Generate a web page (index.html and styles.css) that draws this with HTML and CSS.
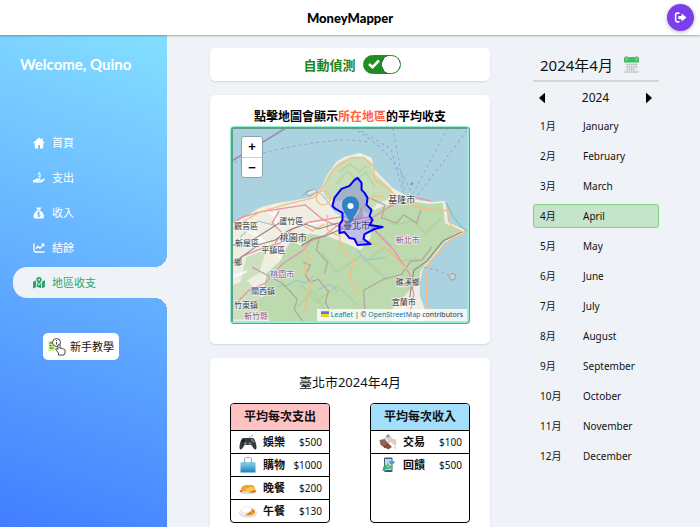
FILE: index.html
```html
<!DOCTYPE html>
<html lang="zh-Hant">
<head>
<meta charset="utf-8">
<meta name="viewport" content="width=device-width, initial-scale=1">
<title>MoneyMapper</title>
<link rel="stylesheet" href="styles.css">
</head>
<body>
<header class="topbar">
  <h1 class="brand">MoneyMapper</h1>
  <button class="logout" type="button" aria-label="Log out">
    <svg viewBox="0 0 24 24" width="13" height="13"><path d="M9 4H6a3 3 0 0 0-3 3v10a3 3 0 0 0 3 3h3" fill="none" stroke="#fff" stroke-width="3" stroke-linecap="round"/><path d="M14 4.500 23 12l-9 7.500V15H9.500A1.500 1.500 0 0 1 8 13.500v-3A1.500 1.500 0 0 1 9.500 9H14z" fill="#fff"/></svg>
  </button>
</header>
<div class="layout">
  <aside class="sidebar">
    <p class="welcome">Welcome, Quino</p>
    <nav class="nav">
      <a class="nav-link" href="#home"><svg viewBox="0 0 24 24"><path d="M12 1 .5 11.500 2 13.200l1.500-1V21a2 2 0 0 0 2 2H10v-7h4v7h4.500a2 2 0 0 0 2-2v-8.800l1.500 1 1.500-1.700-4-3.600V3h-3v2.200z"/></svg>首頁</a>
      <a class="nav-link" href="#expense"><svg viewBox="0 0 24 24"><path d="M0 16h3l2.500-2c1-.8 2-1 3-1h5.500c2 0 2 3 0 3H10.500v1H16l5-3.700c1.800-1 3.500 1 2 2.500l-5.500 4.700c-.7.500-1.300.5-2 .5H0z"/><path d="M15.500 3.500c-1-1.500-5-1.500-5 .7 0 2.300 5 1.200 5 3.600 0 2.200-4 2-5.200.5M13 0v2M13 9v2" fill="none" stroke="currentColor" stroke-width="1.800"/></svg>支出</a>
      <a class="nav-link" href="#income"><svg viewBox="0 0 24 24"><path d="M6 1h11l-3 5H9zM8.500 7h6C19 10 22 14 22 19c0 3-2 4-4 4H5c-2 0-4-1-4-4 0-5 3-9 7.500-12z"/><path class="cut" d="M14 12c-.8-1.700-5-1.700-5 .7 0 2.600 5.200 1.700 5.200 4.300 0 2.300-4.600 2.200-5.500.3M11.500 9.500v11"/></svg>收入</a>
      <a class="nav-link" href="#balance"><svg viewBox="0 0 24 24"><path d="M2 3v14a3 3 0 0 0 3 3h18M6 13.500l4-5 4 4L21 5m-4-.5h4.500V9" fill="none" stroke="currentColor" stroke-width="2.600"/></svg>結餘</a>
      <a class="nav-link active" href="#region" aria-current="page"><svg viewBox="0 0 24 24"><path d="M0 9.500 6 7v13.500L0 23zM18 9l6-2.500V20l-6 2.500zM7.500 11l4.500 6 4.500-6v11.500l-9-3z"/><path d="M12 0c3.300 0 5.500 2.300 5.500 5.200 0 3-3.500 7-5.500 9.300-2-2.300-5.500-6.300-5.500-9.300C6.500 2.300 8.700 0 12 0zm0 3.300a2 2 0 1 0 0 4 2 2 0 0 0 0-4z"/></svg>地區收支</a>
    </nav>
    <button class="tutorial" type="button">
      <svg viewBox="0 0 36 36" width="18" height="18"><path d="M1 6h12v20H1z" fill="#ccf58b"/><g fill="none" stroke="#333" stroke-width="1.800"><path d="M3 10h5M3 15h4M3 20h8"/><circle cx="17" cy="9" r="8" fill="#fff" fill-opacity=".7"/><path d="M17 8v5M17 4v2"/><path d="M21 34v-4c-3-3-4-6-6-8 1-3 3-1 5 1V14c1-3 4-2 4 0v7c3-2 4-1 5 1 3-1 5 0 5 3v5l-2 4z" fill="#fff"/></g></svg>
      新手教學
    </button>
  </aside>

  <main class="content">
    <section class="card detect">
      <label class="detect-label" for="auto">自動偵測</label>
      <span class="switch">
        <input type="checkbox" id="auto" checked>
        <svg class="switch-check" viewBox="0 0 12 10" width="12" height="10"><path d="m1 5 3.500 3.200L11 1.500" fill="none" stroke="#fff" stroke-width="2.600"/></svg>
      </span>
    </section>

    <section class="card map-card">
      <h2 class="map-title">點擊地圖會顯示<em>所在地區</em>的平均收支</h2>
      <div class="map">
        <svg class="map-art" viewBox="234 129 233 192" preserveAspectRatio="xMidYMid slice" role="img" aria-label="地圖">
          <path d="M230 120h245v210H230z" fill="#aad3df"/>
          <path d="M230 224 245 217l17-10 16-4 19-3 15-3 10-9 6-13 9-13 8-5 8-2 7-2 12 5 3 12 10 10 8 8 12 7 13 5 15 2 12-1 2 11 1 10 17 8-3 5-17 7-10 13-12 14-3 13v13l5 14 3 12H230z" fill="#f0eee3"/>
          <g fill="#bddaae">
            <path d="M323 189l6-14 10-12 14-6 11 0 8 6 2 10 10 9 9 9-4 8-12 5-8 9-10-3-9-12-10 3-13-2z" opacity=".8"/>
            <path d="M372 211l18-7 20-3 18 3 15-1 2 20 16 9-16 9-12 15-12 14-3 14-8 6-10 11-8 10-5 17h-93l-12-20-18-18 4-18 12-10 9-17 8-9 15-2 18 3 18 7 13 6 10-12z"/>
            <path d="M285 264l12-10 15 3 30 7 19 25-3 35h-84l-20-22 14-8z"/>
            <path d="M234 285l13-6 14 15 5 25h-32zM247 257l20-7-7 23-19 11z" opacity=".7"/>
          </g>
          <path d="m390 325 4-20 15-12 8 2 4 15 5 15z" fill="#efeee5"/>
          <g fill="none" stroke="#a7ca98" stroke-width="2" opacity=".45"><path d="m340 172 10-8 10 8 7-6M337 184l11-13 9 10 9-9 9 15M385 216l9 9 19-4 12 12 16-14M368 260l17-13 15 14 18-3M322 251l15 21 24-16 26 23M302 284l15 18 21-17 20 20M298 307l15-17 15 24"/></g>
          <g fill="none" stroke="#8ec5d8" stroke-width="1"><path d="m302 197 8-7 12 4 15 19 18 8 15 5 22 20M278 286l10-1 9-5 9 3 8-7M318 290l12-6 9 7M357 250l10 10 19-3M241 237l18-16 15 4"/></g>
          <g fill="none" stroke="#ada59e" stroke-width="1.200"><path d="m253 267 17 9 13 7 7 7 8 9-3 10 9 13M304 262l7 3-5 10 5 7 8-3 10 12-3 11 9 18M366 320l-2-30 20-11 18-5 9-13 11-1 10-13M370 198l15 7-3 13 15 5 7-8 13 8 4-13M320 237l-3 13 11 12-3 12"/></g>
          <g fill="none" stroke="#ffffff" stroke-width="2" opacity=".8"><path d="m240 226 23 13 19 20M248 218l18 32M275 205l3 24 24 16M264 209l28 17 42-5M233 277l15-6M400 299l8 23"/></g>
          <g fill="none" stroke="#e892a2" stroke-width="1.300"><path d="m230 225 14-8 17-5 20-3 25-4 18 15 17 7 28-7 24-15 20-8 18 4M234 261l12-6 20-8 15-4 12-14 18-7 31-5M234 306l16-16 16-7 18-20 19-12 8-10 15-6 19-15M350 221l20-4 5 13 19 20 16 24 4 20-6 30M280 211l-7 12 10 10-7 10"/></g>
          <g fill="none" stroke="#f7bd80" stroke-width="1.300"><path d="m234 229 13-9 14-8 24-7 29-7 10-11 10-18 18-11 12 0 10 8 1 14 13 8 12 12 20 8 28 3 3 15 14 7-14 6-10 11-12 13-3 17 1 19 4 17M306 247l4 12-5 11 7 11-3 13-5 18M340 233l1 14 13 13-4 19 11 17M354 242l16-1 19 10 18 18M347 211l16-3 11-12 10 1M328 215v15l12 6M299 222l14 9 12-7"/><circle cx="324" cy="198" r="7"/></g>
          <g fill="none" stroke="#8b8782" stroke-width="1.100"><path d="m234 245 18-4 14-9 22-14M234 263l25-18 17-5 14-10 16-6 13 5 16-5 19-5M302 246l11-7 13-3 18-8M462 232l-19 9-16 20-13 9-4 27"/></g>
          <g fill="none" stroke="#8995db" stroke-width="1" stroke-dasharray="3 3" opacity=".7"><path d="M230 165q50-20 116-25l22 2M356 128l35 21 13 45M393 128l12 63M448 128l-35 66M467 131l-49 64M411 191q-20-43-58-62M424 267q20 4 28 10"/></g>
          <path d="m230 163 59-36" stroke="#9c8db0" stroke-width="1.700"/>
          <path d="m306 193 9-4 3 3-8 4z" fill="#dce4dd" stroke="#92848b" stroke-width=".7"/>
          <path d="M446 202q10 23 21 29" fill="none" stroke="#85bba8"/>
          <path d="m449 276 3-3 4 2-1 4-4 1z" fill="#d0d4c4" stroke="#8894a5" stroke-width=".8"/><circle cx="412" cy="184" r="1.500" fill="#8e91be"/>
          <g class="place" text-anchor="middle">
            <text x="292" y="224">蘆竹區</text><text x="247" y="229">觀音區</text><text x="248" y="246">新屋區</text><text x="274" y="253">平鎮區</text><text x="402" y="203" class="city">基隆市</text><text x="294" y="241" class="city">桃園市</text><text x="264" y="294">關西鎮</text><text x="247" y="308">竹東鎮</text><text x="408" y="285">礁溪鄉</text><text x="404" y="305">宜蘭市</text><text x="239" y="265">鄉</text>
            <g class="county"><text x="283" y="277">桃園市</text><text x="408" y="243">新北市</text><text x="257" y="319">新竹縣</text></g>
            <text x="357" y="229" class="city">臺北市</text>
          </g>
          <path d="m358 178 4 5 0 7 3 3 3 5-1 7 5 5-2 6 3 4-3 5 13 2-8 2-10 5-1 5 7 5-13 1-3-6-5-1-5-6-5 1v-8l3-5v-7l-7-4-3-3 2-8 7-9 8-3 5-6z" fill="#3333ff" fill-opacity=".25" stroke="#0000f5" stroke-width="2" stroke-linejoin="round"/>
          <path d="m352 222 12-5-2-9z" fill="#444" opacity=".25"/>
          <path d="M351 197c5 0 8 3 8 8 0 6-6 12-8 18-2-6-8-12-8-18 0-5 3-8 8-8z" fill="#2d84c8" stroke="#246da6" stroke-width=".7"/><circle cx="351" cy="206" r="3" fill="#fff"/>
        </svg>
        <div class="zoom"><button type="button" aria-label="Zoom in">+</button><button type="button" aria-label="Zoom out">−</button></div>
        <div class="attribution"><a href="#leaflet"><svg viewBox="0 0 12 8" width="8" height="6"><path fill="#4c7be1" d="M0 0h12v4H0z"/><path fill="#ffd500" d="M0 4h12v3H0z"/><path fill="#e0bc00" d="M0 7h12v1H0z"/></svg> Leaflet</a> | © <a href="#osm">OpenStreetMap</a> contributors</div>
      </div>
    </section>

    <section class="card stats">
      <h2 class="stats-title">臺北市2024年4月</h2>
      <div class="tables">
        <div class="panel">
          <table class="ledger">
            <thead><tr><th class="head expense" colspan="3">平均每次支出</th></tr></thead>
            <tbody>
              <tr><td class="pic"><svg viewBox="0 0 36 32"><path d="M20 9q0-4 4-4 4 0 3-4" fill="none" stroke="#999" stroke-width="1.500"/><path d="M8 8h20c4 1 7 13 7 19 0 5-4 5-7 0l-3-5H11l-3 5c-3 5-7 5-7 0C1 21 4 9 8 8z" fill="#34383d"/><path d="M8 11v7m-3-4h7" stroke="#111" stroke-width="2"/><circle cx="13" cy="19" r="3" fill="#777"/><circle cx="22" cy="19" r="3" fill="#777"/><circle cx="26" cy="12" r="2" fill="#4b9ce4"/><circle cx="29" cy="15" r="2" fill="#63a7d8"/></svg></td><th class="name" scope="row">娛樂</th><td class="amount">$500</td></tr>
              <tr><td class="pic"><svg viewBox="0 0 36 32"><defs><linearGradient id="bag" x2="0" y2="1"><stop stop-color="#93d4ed"/><stop offset="1" stop-color="#1680bd"/></linearGradient></defs><path d="M3 10h30v21H3z" fill="url(#bag)"/><path d="M11 14V5q0-4 4-4h6q4 0 4 4v9" fill="none" stroke="#78a6be" stroke-width="1.800"/></svg></td><th class="name" scope="row">購物</th><td class="amount">$1000</td></tr>
              <tr><td class="pic"><svg viewBox="0 0 36 32"><path d="M1 22h34q-4 6-10 6H9q-6 0-8-6z" fill="#ddd9cf"/><path d="M3 22q1-12 12-12h10q6 0 7 8l3 3q-2 4-7 2z" fill="#f6a12c"/><path d="m11 18 16-5 5 7-15 3z" fill="#ffc45a"/><path d="M1 21q3-2 6 3H3zM27 22l7 0-3 3h-6z" fill="#d84436"/><path d="M22 23h6l-3 2h-5z" fill="#70a83e"/></svg></td><th class="name" scope="row">晚餐</th><td class="amount">$200</td></tr>
              <tr><td class="pic"><svg viewBox="0 0 36 32"><ellipse cx="18" cy="20" rx="18" ry="9" fill="#d3d5d7"/><ellipse cx="18" cy="18" rx="17" ry="9" fill="#eee"/><path d="M20 10c8 0 12 4 12 8s-6 7-13 7H9c8-1 4-4 11-6z" fill="#f59b23"/><path d="M6 17Q6 7 16 7q9 0 9 7-3 6-14 6z" fill="#fff" stroke="#ddd"/><path d="m21 19 3 2m3-5 2 1m-10 5 2 1" stroke="#b64f13" stroke-width="2"/></svg></td><th class="name" scope="row">午餐</th><td class="amount">$130</td></tr>
            </tbody>
          </table>
        </div>
        <div class="panel">
          <table class="ledger">
            <thead><tr><th class="head income" colspan="3">平均每次收入</th></tr></thead>
            <tbody>
              <tr><td class="pic"><svg viewBox="0 0 36 32"><path d="M9 12Q11 3 18 3q9 0 10 10z" fill="#c8dbf8"/><circle cx="18" cy="4" r="3.500" fill="#a89468"/><path d="M1 12 11 10l15 16-7 5L3 22z" fill="#936052"/><path d="m34 11-11-2-8 6 4 4 5-3 8 8 3-5z" fill="#e7c7b9"/><path d="m9 23 3 5m1-7 4 8m0-9 5 7" stroke="#6f4037" stroke-width="2.500"/><path d="m29 26 3 3 2-4" stroke="#c77" fill="none"/></svg></td><th class="name" scope="row">交易</th><td class="amount">$100</td></tr>
              <tr><td class="pic"><svg viewBox="0 0 36 32"><rect x="10" y="1" width="17" height="29" rx="2" fill="#455d71"/><path d="M12 4h13v22H12z" fill="#b6dcf6"/><path d="m20 8 12 0-3 6h-7zM6 25l8-1v4H8z" fill="#529beb"/><path d="M8 22q1-7 8-6l2-5 2 6q6 0 4 5l-7 3-3-2-6 3z" fill="#35b463"/><circle cx="18" cy="19" r="3" fill="#80d56c"/></svg></td><th class="name" scope="row">回饋</th><td class="amount">$500</td></tr>
            </tbody>
          </table>
        </div>
      </div>
    </section>
  </main>

  <aside class="calendar">
    <h2 class="cal-title">2024年4月
      <svg viewBox="0 0 34 36" width="17" height="18"><rect x="2" y="3" width="30" height="31" rx="2" fill="#ebedee"/><path d="M2 4q0-2 2-2h26q2 0 2 2v9H2z" fill="#3ac45a"/><path d="M5 34h24l2-1v-3H3v3z" fill="#cfd1d3"/><path d="M7 17h21M7 22h21M7 27h17" stroke="#b0b4b8" stroke-width="3" stroke-dasharray="3 1.500"/><path d="M7 1v7M27 1v7" stroke="#a3b2aa" stroke-width="4" stroke-linecap="round"/></svg>
    </h2>
    <div class="year">
      <button type="button" aria-label="Previous year"><svg viewBox="0 0 6 10" width="6" height="10"><path d="M5.500.5v9L.5 5z" stroke="#000" stroke-linejoin="round"/></svg></button>
      <span>2024</span>
      <button type="button" aria-label="Next year"><svg viewBox="0 0 6 10" width="6" height="10"><path d="M.5.5v9l5-4.500z" stroke="#000" stroke-linejoin="round"/></svg></button>
    </div>
    <div class="months">
      <button type="button" class="month"><span>1月</span><span>January</span></button>
      <button type="button" class="month"><span>2月</span><span>February</span></button>
      <button type="button" class="month"><span>3月</span><span>March</span></button>
      <button type="button" class="month selected"><span>4月</span><span>April</span></button>
      <button type="button" class="month"><span>5月</span><span>May</span></button>
      <button type="button" class="month"><span>6月</span><span>June</span></button>
      <button type="button" class="month"><span>7月</span><span>July</span></button>
      <button type="button" class="month"><span>8月</span><span>August</span></button>
      <button type="button" class="month"><span>9月</span><span>September</span></button>
      <button type="button" class="month"><span>10月</span><span>October</span></button>
      <button type="button" class="month"><span>11月</span><span>November</span></button>
      <button type="button" class="month"><span>12月</span><span>December</span></button>
    </div>
  </aside>
</div>
</body>
</html>
```
FILE: styles.css
```css
* { box-sizing: border-box; }

:root {
  --page: #eff3f7;
  --sans: "Noto Sans", "Noto Sans CJK TC", sans-serif;
}

body {
  margin: 0;
  height: 100vh;
  display: flex;
  flex-direction: column;
  overflow: hidden;
  background: var(--page);
  color: #111;
  font: 11px/16px var(--sans);
}

h1, h2, p { margin: 0; }
button { padding: 0; border: 0; background: none; color: inherit; font: inherit; cursor: pointer; }
a { text-decoration: none; }

.topbar {
  position: relative;
  z-index: 1;
  flex: none;
  display: grid;
  grid-template-columns: 1fr auto 1fr;
  align-items: center;
  height: 35px;
  padding: 0 6px;
  background: #fff;
  box-shadow: 0 1px 2px rgba(0, 0, 0, .3);
}
.brand { grid-column: 2; font: 900 13px/16px Lato, sans-serif; color: #000; }
.logout {
  justify-self: end;
  display: grid;
  place-items: center;
  width: 27px;
  height: 27px;
  border-radius: 50%;
  background: #7c3eed;
  box-shadow: 0 1px 4px rgba(0, 0, 0, .3);
}

.layout {
  flex: 1;
  min-height: 0;
  display: grid;
  grid-template-columns: 167px minmax(0, 1fr) 167px;
}

.sidebar {
  display: flex;
  flex-direction: column;
  padding-top: 17px;
  background: linear-gradient(20deg, #427eff, #84dfff);
}
.welcome { padding-left: 20px; font: 700 15px/24px Lato, sans-serif; color: #fff; }
.nav { display: flex; flex-direction: column; gap: 4px; margin: 51px 0 0 13px; }
.nav-link {
  position: relative;
  display: flex;
  align-items: center;
  gap: 7px;
  height: 31px;
  padding-left: 20px;
  color: #fff;
}
.nav-link svg { width: 12px; height: 12px; fill: currentColor; }
.nav-link .cut { fill: none; stroke: #68b5fc; stroke-width: 2; }
.nav-link.active { border-radius: 14px 0 0 14px; background: var(--page); color: #2da46a; }
.active::before,
.active::after {
  content: "";
  position: absolute;
  right: 0;
  width: 12px;
  height: 12px;
}
.active::before { bottom: 100%; background: radial-gradient(circle at 0 0, transparent 12px, var(--page) 12px); }
.active::after { top: 100%; background: radial-gradient(circle at 0 100%, transparent 12px, var(--page) 12px); }
.tutorial {
  align-self: flex-start;
  display: flex;
  align-items: center;
  gap: 4px;
  height: 27px;
  margin: 35px 0 0 43px;
  padding: 0 5px;
  border-radius: 5px;
  background: #fff;
}

.content { padding: 13px 43px 0; overflow: hidden; }
.card { margin-bottom: 14px; border-radius: 5px; background: #fff; box-shadow: 0 1px 2px rgba(0, 0, 0, .12); }
.detect { display: flex; align-items: center; justify-content: center; gap: 7px; height: 33px; padding-left: 4px; }
.detect-label { font-size: 13px; font-weight: 700; color: #1f831f; }
.switch { position: relative; display: flex; }
.switch input {
  appearance: none;
  width: 38px;
  height: 19px;
  margin: 0;
  border: 1px solid #228b22;
  border-radius: 10px;
  background: radial-gradient(circle at 27px 50%, #fff 9px, #228b22 9px);
}
.switch-check { position: absolute; left: 5px; top: 4px; pointer-events: none; }

.map-card { padding: 13px 20px 20px; }
.map-title { font-size: 12px; line-height: 18px; font-weight: 700; text-align: center; color: #000; }
.map-title em { font-style: normal; color: #ff6240; }
.map {
  position: relative;
  height: 198px;
  overflow: hidden;
  border: 3px ridge #98f0d4;
  border-radius: 4px;
}
.map-art { display: block; width: 100%; height: 100%; }
.place { font: 500 8px "Noto Sans CJK TC", sans-serif; fill: #555; stroke: #fff; stroke-width: 1px; paint-order: stroke; }
.place .city { font-size: 9px; }
.place .county { font-size: 8px; fill: #8f6d98; }
.zoom {
  position: absolute;
  left: 8px;
  top: 7px;
  display: flex;
  flex-direction: column;
  width: 22px;
  border: 1px solid #8aa4ab;
  border-radius: 3px;
  background: #fff;
}
.zoom button { height: 20px; font: 700 13px/20px "Liberation Sans", sans-serif; color: #000; }
.zoom button + button { border-top: 1px solid #ccc; }
.attribution {
  position: absolute;
  right: 0;
  bottom: 0;
  padding: 0 4px;
  background: rgba(255, 255, 255, .8);
  font-size: 7px;
  line-height: 12px;
  color: #333;
  white-space: nowrap;
}
.attribution a { color: #0078a8; }

.stats { padding: 14px 20px 20px; }
.stats-title { font-size: 13px; line-height: 20px; font-weight: 400; text-align: center; }
.tables { display: flex; justify-content: space-between; margin-top: 11px; }
.panel { width: 100px; overflow: hidden; border: 1px solid #000; border-radius: 4px; }
.ledger { width: 100%; border-collapse: collapse; }
.ledger td, .ledger th { padding: 0; border-bottom: 1px solid #000; }
.ledger tbody tr { height: 23px; }
.ledger tbody tr:last-child > * { border-bottom: 0; }
.ledger .head { height: 26px; font-size: 12px; font-weight: 700; }
.expense { background: #fec2c2; }
.income { background: #a3dffc; }
.ledger .pic { width: 32px; padding-left: 8px; }
.pic svg { display: block; width: 18px; height: 16px; }
.name { text-align: left; font-weight: 700; }
.ledger .amount { padding-right: 7px; text-align: right; font-size: 10px; }

.calendar { padding: 18px 41px 0 0; }
.cal-title {
  display: flex;
  align-items: center;
  gap: 10px;
  height: 29px;
  padding: 0 0 4px 7px;
  border-bottom: 2px solid #d3d7da;
  font-size: 15px;
  line-height: 24px;
  font-weight: 400;
  white-space: nowrap;
}
.year { display: flex; align-items: center; justify-content: space-between; height: 32px; padding: 0 7px 0 6px; font-size: 12px; }
.year button { display: flex; }
.months { display: flex; flex-direction: column; gap: 6px; }
.month {
  display: grid;
  grid-template-columns: 43px 1fr;
  align-items: center;
  height: 24px;
  padding-left: 6px;
  border: 1px solid transparent;
  border-radius: 3px;
  text-align: left;
  font-size: 10px;
}
.selected { border-color: #82cc88; background: #c6e4cb; }
```
